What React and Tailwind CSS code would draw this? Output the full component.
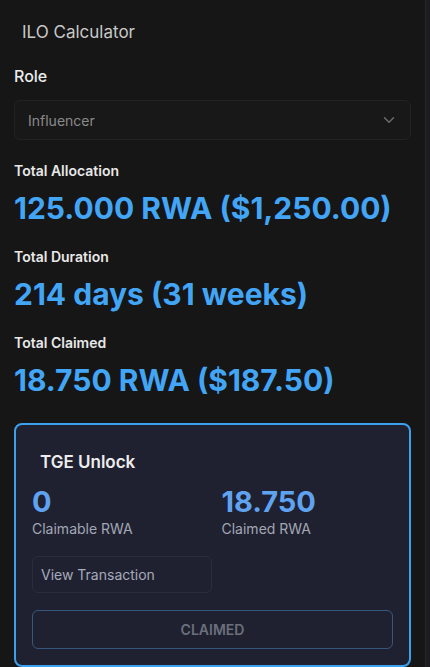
export default function App() {
  return (
    <div className="flex min-h-[667px] w-[430px] bg-[#161616]" style={{ fontFamily: "Inter, 'Noto Sans', sans-serif" }}>
      <div className="flex w-[425px] flex-col px-[14px]">
        <div className="pl-2 pt-[20px] text-[17px] leading-[24px] text-[#c8c8c8]">ILO Calculator</div>
        <div className="mt-[22px] text-[16px] font-medium leading-[20px] text-[#ececec]">Role</div>
        <div className="mt-[14px] flex h-[40px] items-center justify-between rounded-md border border-[#232323] bg-[#181818] pl-[13px] pr-[12px]">
          <span className="text-[14px] text-[#8a8a8a]">Influencer</span>
          <svg width="18" height="18" viewBox="0 0 24 24" fill="none" stroke="#6b6b6b" strokeWidth="2" strokeLinecap="round" strokeLinejoin="round"><path d="M6 9l6 6 6-6" /></svg>
        </div>
        <div className="mt-[22px] flex flex-col">
          {[
            ["Total Allocation", "125.000 RWA ($1,250.00)"],
            ["Total Duration", "214 days (31 weeks)"],
            ["Total Claimed", "18.750 RWA ($187.50)"],
          ].map(([l, v]) => (
            <div key={l} className="flex h-[86px] flex-col">
              <div className="text-[14px] font-semibold leading-[18px] text-[#e8e8e8]">{l}</div>
              <div className="mt-[10px] text-[30px] font-bold leading-[36px] text-[#42a5f5]">{v}</div>
            </div>
          ))}
        </div>
        <div className="mt-[3px] flex flex-col rounded-lg border-2 border-[#3ba0ee] bg-[#1f2130] px-4 pb-4 pt-[26px]">
          <div className="pl-2 text-[17px] font-semibold leading-[22px] text-[#ededed]">TGE Unlock</div>
          <div className="mt-[12px] grid grid-cols-2">
            <div className="flex flex-col">
              <div className="text-[29px] font-bold leading-[34px] text-[#5fa3f0]">0</div>
              <div className="mt-[1px] text-[14px] leading-[18px] text-[#a3a7b5]">Claimable RWA</div>
            </div>
            <div className="flex flex-col pl-[9px]">
              <div className="text-[29px] font-bold leading-[34px] text-[#5fa3f0]">18.750</div>
              <div className="mt-[1px] text-[14px] leading-[18px] text-[#a3a7b5]">Claimed RWA</div>
            </div>
          </div>
          <div className="mt-[18px] flex h-[37px] w-[180px] items-center rounded-md border border-[#2a2d3b] pl-[8px] text-[14px] text-[#a6aabb]">View Transaction</div>
          <div className="mt-[17px] flex h-[39px] items-center justify-center rounded-md border border-[#35577d] text-[14px] font-semibold text-[#6b707c]">CLAIMED</div>
        </div>
      </div>
      <div className="w-[5px] border-l border-[#26262c] bg-[#1d1d21]" />
    </div>
  );
}
